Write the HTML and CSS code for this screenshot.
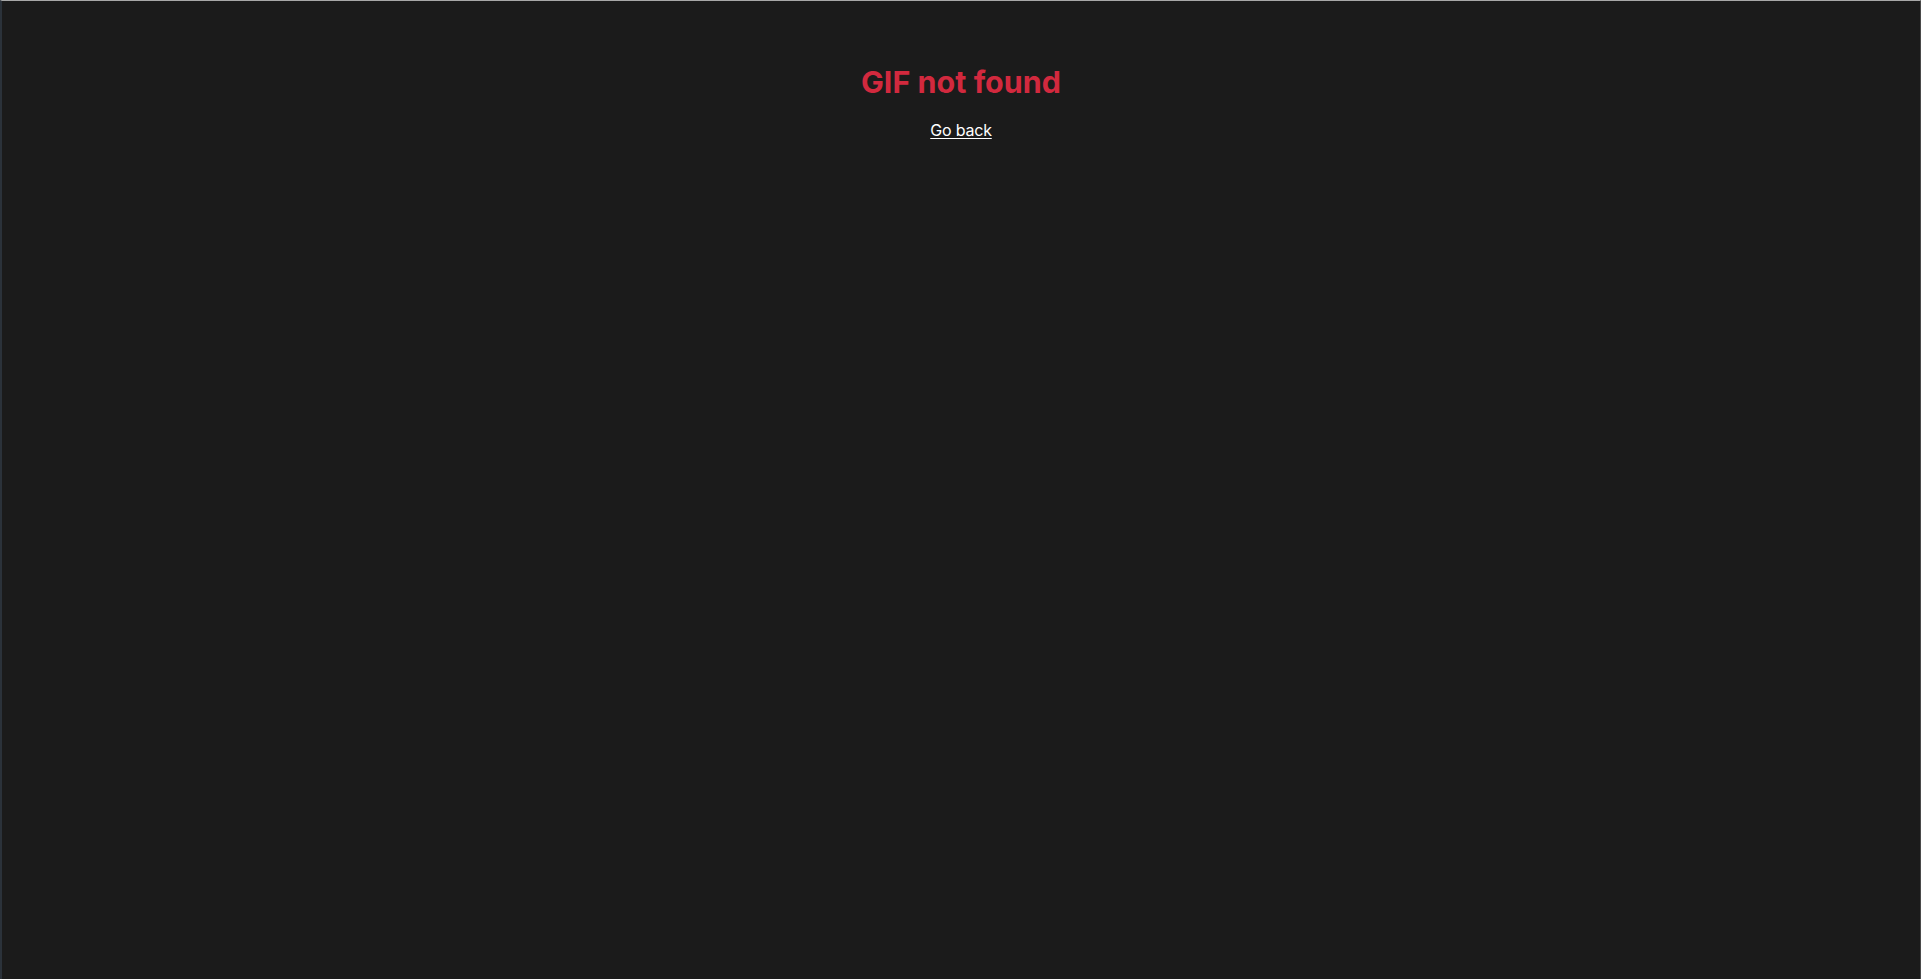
FILE: index.html
```html
<!DOCTYPE html>
<html lang="en">
<head>
<meta charset="utf-8">
<title>GIF not found</title>
<link rel="stylesheet" href="styles.css">
</head>
<body>
<main class="page">
  <h1 class="title">GIF not found</h1>
  <a class="back" href="#">Go back</a>
</main>
</body>
</html>
```
FILE: styles.css
```css
html, body {
  margin: 0;
  padding: 0;
  height: 100%;
}
body {
  background: #1b1b1b;
  font-family: Inter, "Noto Sans", sans-serif;
  color: #ffffff;
  box-sizing: border-box;
  border-top: 1px solid #a8a8a8;
  border-left: 2px solid #2b323a;
  border-right: 1px solid #4a4a4a;
}
.page {
  display: flex;
  flex-direction: column;
  align-items: center;
  padding-top: 63px;
  gap: 19px;
}
.title {
  margin: 0;
  font-size: 30.5px;
  font-weight: 700;
  color: #d2293e;
  line-height: 1.2;
}
.back {
  color: #ffffff;
  font-size: 16px;
  letter-spacing: -0.2px;
  text-decoration: underline;
  text-decoration-thickness: 1px;
  text-underline-offset: 2px;
}
```
